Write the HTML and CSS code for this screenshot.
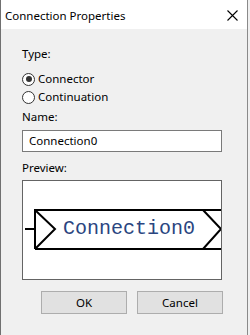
FILE: index.html
```html
<!DOCTYPE html>
<html lang="en">
<head>
  <title>Connection Properties</title>
  <link rel="stylesheet" href="styles.css">
</head>
<body>

<div class="window">
  <div class="titlebar">
    <span class="title">Connection Properties</span>
    <svg class="close" width="11" height="11" viewBox="0 0 11 11">
      <path d="M0.5 0.5 L10.5 10.5 M10.5 0.5 L0.5 10.5" stroke="#000" stroke-width="1.1" fill="none"/>
    </svg>
  </div>

  <div class="content">
    <div class="label">Type:</div>
    <div class="radio-group">
      <label class="radio checked"><span class="dot"></span>Connector</label>
      <label class="radio"><span class="dot"></span>Continuation</label>
    </div>

    <div class="label name-label">Name:</div>
    <div class="textbox">Connection0</div>

    <div class="label preview-label">Preview:</div>
    <div class="preview">
      <svg width="198" height="98" viewBox="0 0 198 98">
        <g stroke="#000" stroke-width="2" fill="none">
          <path d="M2 48 H12"/>
          <path d="M12 28 V68"/>
          <path d="M12 29 H198"/>
          <path d="M12 68 H198"/>
          <path d="M12 29 L32 48 L12 68"/>
          <path d="M180 29 L198 48 L180 68"/>
        </g>
        <text x="40" y="53" class="preview-text">Connection0</text>
      </svg>
    </div>

    <div class="buttons">
      <button class="btn">OK</button>
      <button class="btn">Cancel</button>
    </div>
  </div>
</div>

</body>
</html>
```

FILE: styles.css
```css
* {
  margin: 0;
  padding: 0;
  box-sizing: border-box;
  font-family: "Noto Sans", "Open Sans", sans-serif;
}
body {
  background-color: #f0f0f0;
  width: 250px;
  height: 335px;
  overflow: hidden;
}
.window {
  width: 248px;
  height: 335px;
  background-color: #f0f0f0;
  border-left: 1px solid #707070;
  border-right: 1px solid #8a8a8a;
}
.titlebar {
  height: 29px;
  background-color: #ffffff;
  display: flex;
  align-items: center;
  justify-content: space-between;
  padding: 0 9px 0 4px;
}
.title {
  font-size: 11.5px;
  color: #000;
  margin-top: 1px;
}
.close {
  display: block;
  margin-top: 1px;
}
.content {
  padding: 17px 24px 0 21px;
  font-size: 11.5px;
  color: #000;
}
.label {
  line-height: 16px;
  height: 16px;
}
.radio-group {
  margin-top: 8px;
  display: flex;
  flex-direction: column;
}
.radio {
  display: flex;
  align-items: center;
  height: 18px;
  line-height: 18px;
}
.dot {
  width: 13px;
  height: 13px;
  border: 1px solid #333333;
  border-radius: 50%;
  background-color: #ffffff;
  margin-right: 3px;
  position: relative;
}
.radio.checked .dot::after {
  content: "";
  position: absolute;
  left: 2.5px;
  top: 2.5px;
  width: 6px;
  height: 6px;
  border-radius: 50%;
  background-color: #333333;
}
.name-label {
  margin-top: 3px;
}
.textbox {
  margin-top: 5px;
  width: 200px;
  height: 22px;
  border: 1px solid #7a7a7a;
  background-color: #ffffff;
  line-height: 20px;
  padding-left: 6px;
}
.preview-label {
  margin-top: 8px;
}
.preview {
  margin-top: 4px;
  width: 200px;
  height: 100px;
  border: 1px solid #646464;
  background-color: #ffffff;
  overflow: hidden;
}
.preview svg {
  display: block;
}
.preview-text {
  font-family: "Liberation Mono", "Courier New", monospace;
  font-size: 20px;
  fill: #2a4580;
}
.buttons {
  margin-top: 11px;
  width: 201px;
  display: flex;
  justify-content: flex-end;
  gap: 10px;
}
.btn {
  width: 86px;
  height: 23px;
  background-color: #e1e1e1;
  border: 1px solid #adadad;
  font-size: 11.5px;
  color: #000;
}
```
